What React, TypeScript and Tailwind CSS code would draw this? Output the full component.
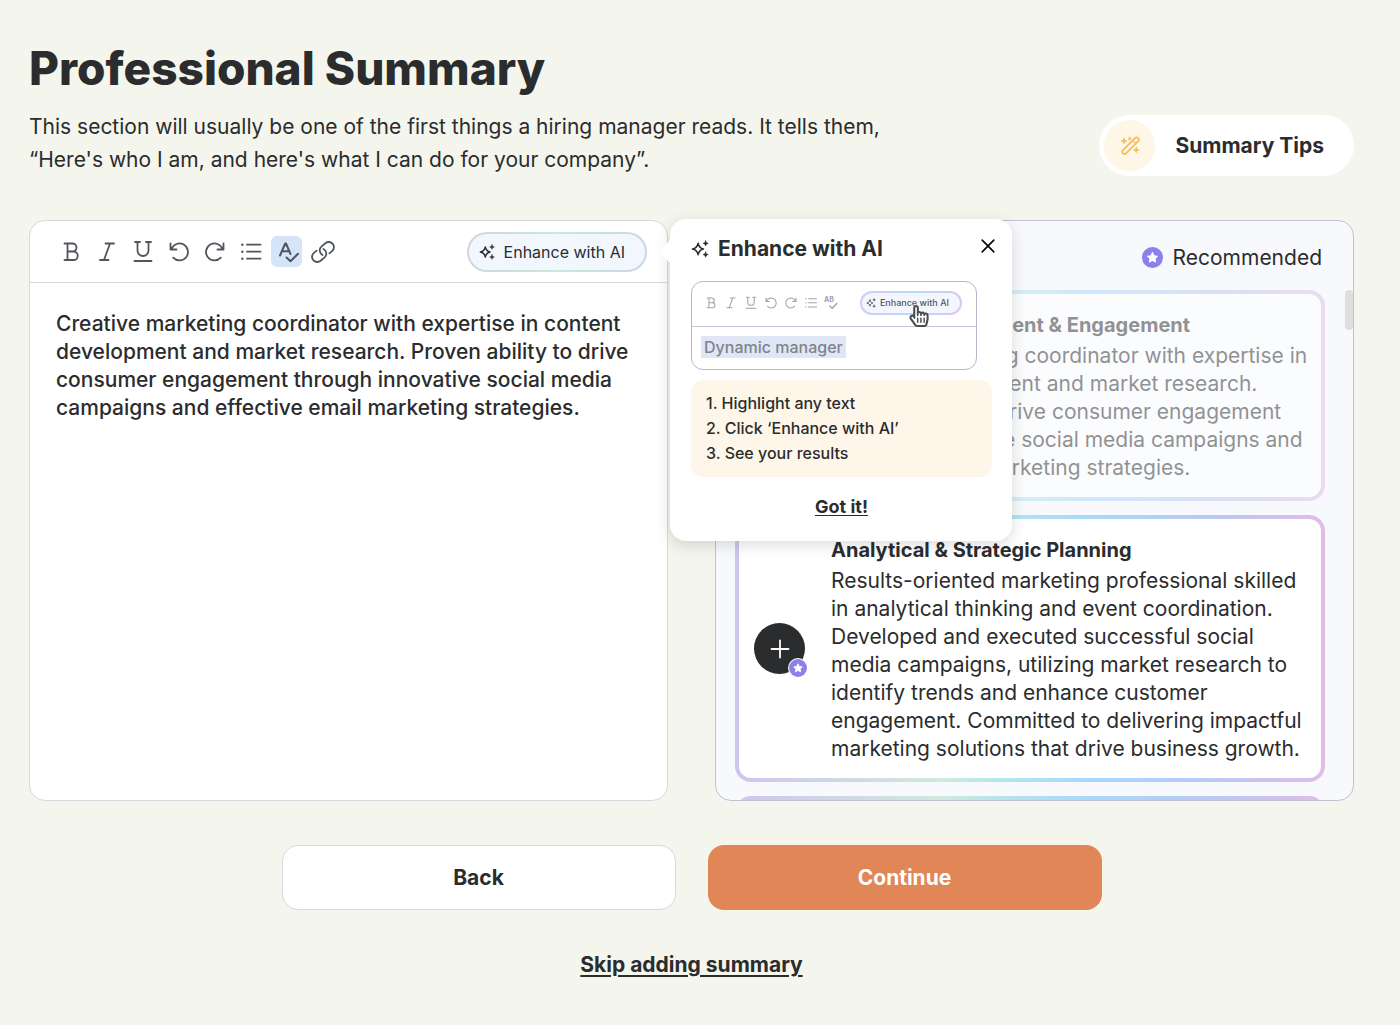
import type { ReactNode } from "react"
import { FaHandPointer, FaRegHandPointer } from "react-icons/fa"

type IconProps = { className?: string; children?: ReactNode }

const Icon = ({ className = "size-6", children }: IconProps) => (
  <svg
    className={className}
    viewBox="0 0 24 24"
    fill="none"
    stroke="currentColor"
    strokeWidth="1.8"
    strokeLinecap="round"
    strokeLinejoin="round"
    aria-hidden="true"
  >
    {children}
  </svg>
)

const BoldIcon = ({ className }: IconProps) => (
  <Icon className={className}>
    <path d="M5.5 3.5h8a4 4 0 0 1 0 8h-5M13.5 11.5h1a4.25 4.25 0 0 1 0 8.5h-9M8.5 3.5V20" />
  </Icon>
)

const ItalicIcon = ({ className }: IconProps) => (
  <Icon className={className}>
    <path d="M10.5 3.5H19M5 20h8.5M15 3.5 9 20" />
  </Icon>
)

const UnderlineIcon = ({ className }: IconProps) => (
  <Icon className={className}>
    <path d="M4 2h5M15 2h5M6.5 2v8.5a5.5 5.5 0 0 0 11 0V2M3.5 21h17" />
  </Icon>
)

const UndoIcon = ({ className }: IconProps) => (
  <Icon className={className}>
    <path d="M3.5 3.5v6h6M4.5 9a8.5 8.5 0 1 1 1.7 8.7" />
  </Icon>
)

const RedoIcon = ({ className }: IconProps) => (
  <Icon className={className}>
    <path d="M20.5 3.5v6h-6M19.5 9a8.5 8.5 0 1 0-1.7 8.7" />
  </Icon>
)

const ListIcon = ({ className }: IconProps) => (
  <Icon className={className}>
    <path d="M8 4.7h13.5M8 11.7h13.5M8 18.7h13.5" />
    <path d="M3.3 4.7h.01M3.3 11.7h.01M3.3 18.7h.01" strokeWidth="2.4" />
  </Icon>
)

const SpellIcon = ({ className }: IconProps) => (
  <Icon className={className}>
    <path d="M5 15.5 10.2 3.5h.8l4.5 10.5M7 11.3h7.2" strokeWidth="2" />
    <path d="m11.5 17.5 4 3.7 7.5-7.5" strokeWidth="2" />
  </Icon>
)

const LinkIcon = ({ className }: IconProps) => (
  <Icon className={className}>
    <g transform="rotate(-40 12 12)">
      <path d="M8 6.8H4.5a5.2 5.2 0 0 0 0 10.4h5a5.2 5.2 0 0 0 4.8-7.2" />
      <path d="M16 17.2h3.5a5.2 5.2 0 0 0 0-10.4h-5a5.2 5.2 0 0 0-4.8 7.2" />
    </g>
  </Icon>
)

const SparkleIcon = ({ className }: IconProps) => (
  <Icon className={className}>
    <path
      d="M9.5 4.5C10.5 9 12 11 16.5 12 12 13 10.5 15 9.5 19.5 8.5 15 7 13 2 12 7 11 8.5 9 9.5 4.5Z"
      strokeWidth="2.2"
    />
    <path
      d="M19.5 1c.5 2.2 1.2 3 3.5 3.5-2.3.5-3 1.3-3.5 3.5-.5-2.2-1.2-3-3.5-3.5 2.3-.5 3-1.3 3.5-3.5ZM19.5 16c.5 2.2 1.2 3 3.5 3.5-2.3.5-3 1.3-3.5 3.5-.5-2.2-1.2-3-3.5-3.5 2.3-.5 3-1.3 3.5-3.5Z"
      fill="currentColor"
      strokeWidth=".8"
    />
  </Icon>
)

const WandIcon = ({ className }: IconProps) => (
  <Icon className={className}>
    <g transform="rotate(45 12.7 11.6)">
      <rect x="10.5" y="1" width="4.4" height="21.5" rx="2.2" strokeWidth="1.7" />
      <path d="M10.5 6.5h4.4" strokeWidth="1.2" />
    </g>
    <path
      d="M6 4.2 6.7 6.3 8.8 7 6.7 7.7 6 9.8 5.3 7.7 3.2 7 5.3 6.3ZM11.7 3l.4 1.3 1.3.4-1.3.4-.4 1.3-.4-1.3-1.3-.4 1.3-.4ZM18.3 13.2l.7 2.1 2.1.7-2.1.7-.7 2.1-.7-2.1-2.1-.7 2.1-.7Z"
      fill="currentColor"
      strokeWidth=".8"
    />
  </Icon>
)

const StarBadge = ({ className = "size-5" }: IconProps) => (
  <svg className={className} viewBox="0 0 20 20" aria-hidden="true">
    <circle cx="10" cy="10" r="10" fill="#8c80ea" />
    <path
      d="m10 5.3 1.45 3 3.25.45-2.35 2.3.6 3.25L10 12.75 7.05 14.3l.6-3.25L5.3 8.75l3.25-.45Z"
      fill="#fff"
      stroke="#fff"
      strokeWidth="1"
      strokeLinejoin="round"
    />
  </svg>
)

const tools = [
  { name: "Bold", icon: BoldIcon },
  { name: "Italic", icon: ItalicIcon },
  { name: "Underline", icon: UnderlineIcon },
  { name: "Undo", icon: UndoIcon },
  { name: "Redo", icon: RedoIcon },
  { name: "Bulleted list", icon: ListIcon },
  { name: "Spell check", icon: SpellIcon, active: true },
  { name: "Insert link", icon: LinkIcon },
]

const summary =
  "Creative marketing coordinator with expertise in content development and market research. Proven ability to drive consumer engagement through innovative social media campaigns and effective email marketing strategies."

const suggestions = [
  {
    title: "Content Development & Engagement",
    text: summary,
    used: true,
  },
  {
    title: "Analytical & Strategic Planning",
    text: "Results-oriented marketing professional skilled in analytical thinking and event coordination. Developed and executed successful social media campaigns, utilizing market research to identify trends and enhance customer engagement. Committed to delivering impactful marketing solutions that drive business growth.",
    used: false,
  },
]

const MiniEditor = () => (
  <div className="mr-[15px] h-[89px] overflow-hidden rounded-xl border border-[#b4b7c9]" aria-hidden="true">
    <div className="flex h-[45px] items-center justify-between border-b border-[#c3c6d6] px-3 pb-0.5">
      <div className="flex gap-1.5 text-[#a0a3ae]">
        <BoldIcon className="size-3.5" />
        <ItalicIcon className="size-3.5" />
        <UnderlineIcon className="size-3.5" />
        <UndoIcon className="size-3.5" />
        <RedoIcon className="size-3.5" />
        <ListIcon className="size-3.5" />
        <Icon className="size-3.5">
          <text x="0" y="11" fontSize="12" fontWeight="700" fill="currentColor" stroke="none">
            AB
          </text>
          <path d="m10 17 4 4 8-8" strokeWidth="2.4" />
        </Icon>
      </div>
      <div className="relative mr-0.5 rounded-full bg-linear-to-r from-[#d9c9f0] via-[#b5dcf7] to-[#dfc4ee] p-[2px]">
        <div className="flex h-5 items-center gap-1 rounded-full bg-[#f3f6fd] pr-[11px] pl-1 text-[9px] font-medium text-[#55575f]">
          <SparkleIcon className="size-[10px]" />
          Enhance with AI
        </div>
        <div className="absolute top-[14px] left-12 size-[22px]">
          <FaHandPointer className="absolute inset-0 size-[22px] text-white" />
          <FaRegHandPointer className="absolute inset-0 size-[22px] text-[#4b4c50]" />
        </div>
      </div>
    </div>
    <div className="px-[9px] py-2">
      <span className="inline-block bg-[#dfe7f6] px-[3px] text-base leading-[22px] font-medium text-[#80838b]">
        Dynamic manager
      </span>
    </div>
  </div>
)

const EnhancePopover = () => (
  <div
    role="dialog"
    aria-labelledby="enhance-title"
    className="absolute -top-px left-full z-10 ml-0.5 w-[342px] rounded-2xl bg-white pr-5 pb-5 pl-[21px] shadow-[0_4px_16px_rgba(0,0,0,0.14)]"
  >
    <span className="absolute top-6 -left-2 size-[17px] rotate-45 rounded-xs bg-white" />
    <div className="mb-0.5 flex h-[60px] items-center">
      <SparkleIcon className="size-[18px]" />
      <h2 id="enhance-title" className="ml-[9px] text-[21px] leading-7 font-bold">
        Enhance with AI
      </h2>
      <button
        type="button"
        aria-label="Close"
        className="-mr-2 mb-1.5 ml-auto flex size-6 items-center justify-center text-black"
      >
        <Icon className="size-5">
          <path d="m5 5 14 14M19 5 5 19" strokeWidth="1.9" />
        </Icon>
      </button>
    </div>
    <MiniEditor />
    <ol className="mt-[10px] rounded-xl bg-[#fef7e9] px-[15px] py-[11px] text-base leading-[25px] font-medium">
      <li>1. Highlight any text</li>
      <li>2. Click ‘Enhance with AI’</li>
      <li>3. See your results</li>
    </ol>
    <div className="mt-4 flex justify-center">
      <button type="button" className="text-lg leading-7 font-bold underline underline-offset-2">
        Got it!
      </button>
    </div>
  </div>
)

const Editor = () => (
  <div className="relative">
    <section className="flex h-full flex-col overflow-hidden rounded-2xl border border-[#d6d9de] bg-white">
      <div className="flex h-[62px] items-center justify-between border-b border-[#d6d9de] pr-5 pl-[25px]">
        <div className="flex gap-[5px] text-[#50555e]">
          {tools.map(({ name, icon: ToolIcon, active }) => (
            <button
              key={name}
              type="button"
              aria-label={name}
              className={
                active
                  ? "flex size-[31px] items-center justify-center rounded-md bg-[#d6e4fa]"
                  : "flex size-[31px] items-center justify-center rounded-md"
              }
            >
              <ToolIcon />
            </button>
          ))}
        </div>
        <button
          type="button"
          className="rounded-full bg-linear-to-r from-[#cdd6dd] via-[#c6ead8] to-[#c8d6ea] p-[2px]"
        >
          <span className="flex h-9 items-center gap-[9px] rounded-full bg-[#f2f7fe] pr-5 pl-[10px] text-base">
            <SparkleIcon className="size-4" />
            Enhance with AI
          </span>
        </button>
      </div>
      <textarea
        aria-label="Professional summary"
        defaultValue={summary}
        className="w-full grow resize-none bg-transparent px-[26px] py-[27px] text-[21px] leading-7 font-medium outline-none"
      />
    </section>
    <EnhancePopover />
  </div>
)

const cardBorder =
  "shrink-0 rounded-2xl bg-[linear-gradient(90deg,#cfc5ef,#cfeadd_35%,#b5e5ec_45%,#a8d8fc_60%,#bcc8f2_82%,#e0bde8)] p-1"

const Suggestions = () => (
  <section className="relative flex h-[581px] flex-col overflow-hidden rounded-2xl border border-[#bfc2d2] bg-[#f8f9fc]">
    <div className="flex h-[69px] shrink-0 items-center justify-end gap-[10px] pt-1 pr-[31px] text-[21px]">
      <StarBadge className="size-[21px]" />
      Recommended
    </div>
    <div className="flex min-h-0 grow flex-col gap-[14px] overflow-hidden pr-7 pl-[19px]">
      {suggestions.map(({ title, text, used }) => (
        <div key={title} className={used ? `${cardBorder} opacity-50` : cardBorder}>
          <div className="flex items-center gap-[26px] rounded-xl bg-white py-[15px] pr-2 pl-[15px]">
            <button
              type="button"
              disabled={used}
              aria-label={`Add ${title}`}
              className="relative flex size-[51px] shrink-0 items-center justify-center rounded-full bg-[#2b2c2e] text-white"
            >
              <Icon>
                <path d="M12 3.5v17M3.5 12h17" />
              </Icon>
              <span className="absolute -right-[3px] -bottom-1 rounded-full bg-white p-px">
                <StarBadge className="size-[18px]" />
              </span>
            </button>
            <div className="text-[21px] leading-7">
              <h3 className="text-xl leading-[33px] font-bold">{title}</h3>
              <p>{text}</p>
            </div>
          </div>
        </div>
      ))}
      <div className={`${cardBorder} h-40`}>
        <div className="h-full rounded-xl bg-white" />
      </div>
    </div>
    <span className="absolute top-[69px] right-0 h-10 w-2 rounded-sm bg-[#dedede]" />
  </section>
)

export default function App() {
  return (
    <main className="min-h-screen bg-[#f4f5ec] pt-[38px] pr-[46px] pb-8 pl-[29px] font-['Inter',sans-serif] text-[#2b2c2e]">
      <header className="flex items-end justify-between">
        <div>
          <h1 className="text-[46px] leading-[60px] font-extrabold">Professional Summary</h1>
          <p className="mt-3 max-w-[900px] text-[21px] leading-[33px]">
            This section will usually be one of the first things a hiring manager reads. It tells them, “Here's who I
            am, and here's what I can do for your company”.
          </p>
        </div>
        <button
          type="button"
          className="flex shrink-0 items-center gap-5 rounded-full bg-white py-[5px] pr-[30px] pl-[5px] text-[21px] font-bold"
        >
          <span className="flex size-[51px] items-center justify-center rounded-full bg-[#fef6e6] text-[#f3bd5c]">
            <WandIcon />
          </span>
          Summary Tips
        </button>
      </header>

      <div className="mt-11 grid grid-cols-2 gap-[47px]">
        <Editor />
        <Suggestions />
      </div>

      <div className="mx-auto mt-11 grid max-w-[820px] grid-cols-2 gap-8 text-[21px] font-bold">
        <button type="button" className="h-[65px] rounded-2xl border border-[#d6d9e0] bg-white">
          Back
        </button>
        <button type="button" className="h-[65px] rounded-2xl bg-[#e18656] text-white">
          Continue
        </button>
      </div>
      <div className="mt-10 text-center">
        <a href="#skip" className="text-[21px] leading-[30px] font-bold underline underline-offset-3">
          Skip adding summary
        </a>
      </div>
    </main>
  )
}
